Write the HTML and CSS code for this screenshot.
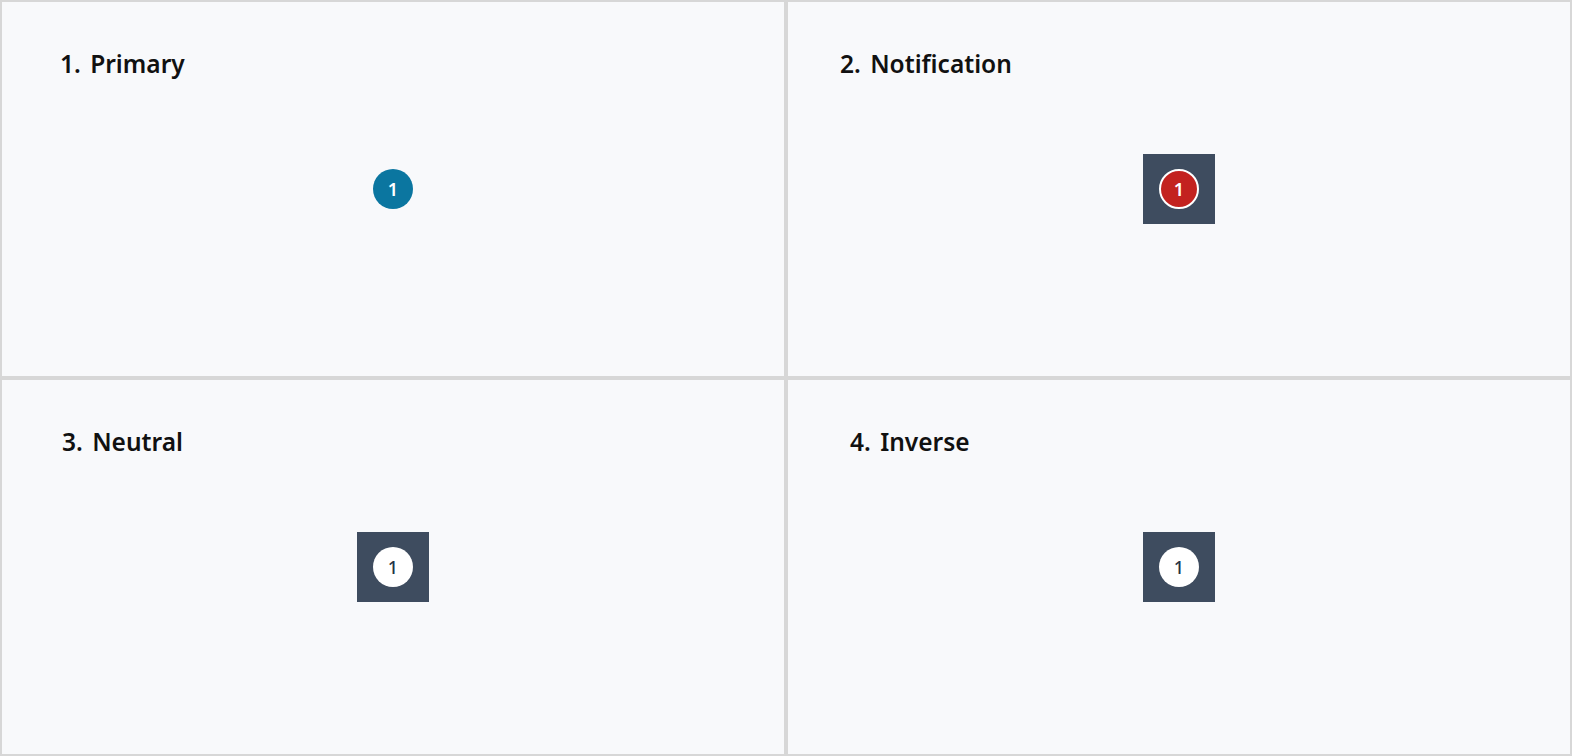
FILE: index.html
```html
<!DOCTYPE html>
<html>
<head>
<meta charset="utf-8">
<link rel="stylesheet" href="styles.css">
</head>
<body>
<div class="grid">
  <section class="cell">
    <h2 class="title t1"><span class="num">1.</span> Primary</h2>
    <div class="stage">
      <span class="badge primary">1</span>
    </div>
  </section>
  <section class="cell">
    <h2 class="title t2"><span class="num">2.</span> Notification</h2>
    <div class="stage dark">
      <span class="badge notification">1</span>
    </div>
  </section>
  <section class="cell">
    <h2 class="title t3"><span class="num">3.</span> Neutral</h2>
    <div class="stage dark">
      <span class="badge neutral">1</span>
    </div>
  </section>
  <section class="cell">
    <h2 class="title t4"><span class="num">4.</span> Inverse</h2>
    <div class="stage dark">
      <span class="badge inverse">1</span>
    </div>
  </section>
</div>
</body>
</html>
```
FILE: styles.css
```css
html, body {
  margin: 0;
  padding: 0;
  background: #f8f9fb;
}
body {
  font-family: "Noto Sans", "Open Sans", sans-serif;
  color: #111;
}
.grid {
  display: grid;
  grid-template-columns: 786px 786px;
  grid-template-rows: 378px 378px;
  width: 1572px;
  height: 756px;
}
.cell {
  box-sizing: border-box;
  border: 2px solid #d7d7d7;
  background: #f8f9fb;
  display: grid;
  grid-template: 1fr / 1fr;
}
.title {
  grid-area: 1 / 1;
  align-self: start;
  justify-self: start;
  margin: 0;
  margin-top: 47px;
  font-size: 24.5px;
  font-weight: 600;
  line-height: 30px;
}
.num {
  margin-right: 3px;
}
.t1 { margin-left: 58px; }
.t2 { margin-left: 52px; }
.t3 { margin-left: 60px; }
.t4 { margin-left: 62px; }
.stage {
  grid-area: 1 / 1;
  place-self: center;
  display: flex;
  align-items: center;
  justify-content: center;
}
.stage.dark {
  width: 72px;
  height: 70px;
  background: #3e4c5f;
}
.badge {
  box-sizing: border-box;
  width: 40px;
  height: 40px;
  border-radius: 50%;
  display: flex;
  align-items: center;
  justify-content: center;
  font-size: 18px;
  font-weight: 600;
  line-height: 1;
}
.primary {
  background: #0b76a0;
  color: #fff;
}
.notification {
  background: #c3221f;
  color: #fff;
  border: 2px solid #fff;
}
.neutral, .inverse {
  background: #fff;
  color: #253346;
  font-weight: 500;
}
```
